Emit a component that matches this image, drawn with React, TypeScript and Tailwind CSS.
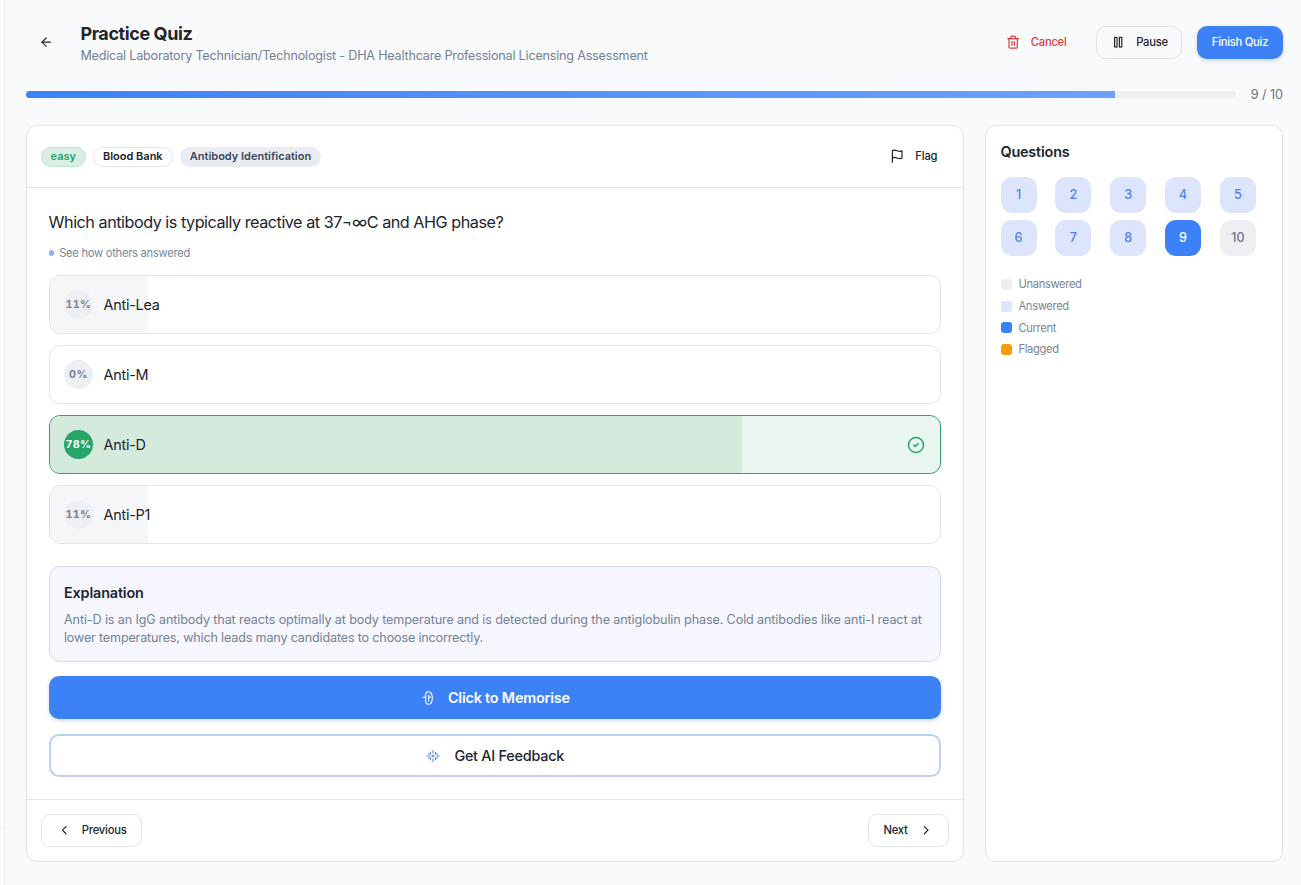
import type { ReactNode } from "react";
import { ArrowLeft, ChevronLeft, ChevronRight, CircleCheck, Trash2 } from "lucide-react";

type Option = { label: string; percent: string; share: number; correct?: boolean };

const options: Option[] = [
  { label: "Anti-Lea", percent: "11%", share: 11.1 },
  { label: "Anti-M", percent: "0%", share: 0 },
  { label: "Anti-D", percent: "78%", share: 77.8, correct: true },
  { label: "Anti-P1", percent: "11%", share: 11.1 },
];

const legend = [
  { label: "Unanswered", color: "bg-[#edeff2]" },
  { label: "Answered", color: "bg-[#dde5fc]" },
  { label: "Current", color: "bg-[#3c82f6]" },
  { label: "Flagged", color: "bg-[#f59e0b]" },
];

function PauseIcon() {
  return (
    <svg width="14.4" height="14.4" viewBox="0 0 24 24" fill="none" stroke="currentColor" strokeWidth="2">
      <rect x="6" y="4" width="4" height="16" />
      <rect x="14" y="4" width="4" height="16" />
    </svg>
  );
}

function FlagIcon() {
  return (
    <svg width="14.4" height="14.4" viewBox="0 0 24 24" fill="none" stroke="currentColor" strokeWidth="2" strokeLinecap="round" strokeLinejoin="round">
      <path d="M4 15s1-1 4-1 5 2 8 2 4-1 4-1V3s-1 1-4 1-5-2-8-2-4 1-4 1z" />
      <line x1="4" x2="4" y1="22" y2="15" />
    </svg>
  );
}

function MemoriseIcon() {
  return (
    <svg width="12" height="14" viewBox="0 0 12 14" fill="none" stroke="currentColor" strokeWidth="1.1" strokeLinecap="round" strokeLinejoin="round">
      <path d="M3.9 2.2C4.5 0.9 5.8 0.5 7 0.8C9.2 1.3 10.3 3.8 10.3 6.9S9.2 12.7 7 13.2C5.6 13.4 4.2 12.8 3.8 11.4C3.5 10.4 3.6 9.4 3.7 8.4V5.4C3.5 4.3 3.4 3.2 3.9 2.2Z" />
      <path d="M1.2 6.4H3.5M6.6 4v6.2M6.7 6.5c.9.2 1.4-.1 1.5-.9" />
    </svg>
  );
}

function FeedbackIcon() {
  return (
    <svg width="14" height="14" viewBox="0 0 14 14" fill="none" stroke="currentColor" strokeWidth="1" strokeLinecap="round">
      <path d="M7 1.4V4M7 6V8M7 10v2.6M1 7h2.4M5.6 7h2.8M10.6 7H13M4.5 3.2v2M4.5 8.8v2M9.5 3.2v2M9.5 8.8v2M2.4 5h1M2.4 9h1M10.6 5h1M10.6 9h1" />
    </svg>
  );
}

function Badge({ className, children }: { className: string; children: ReactNode }) {
  return (
    <span className={"flex h-5 items-center justify-center rounded-full border text-[11px] leading-none font-semibold " + className}>
      {children}
    </span>
  );
}

function OptionRow({ label, percent, share, correct }: Option) {
  return (
    <button
      className={
        "relative flex h-[59px] w-full items-center overflow-hidden rounded-[11px] border px-[14.4px] text-left " +
        (correct ? "border-[#2fa36b] bg-[#e9f5ef]" : "border-[#e1e5ea] bg-white")
      }
    >
      <span
        className={"absolute inset-y-0 left-0 " + (correct ? "bg-[#d3eadd]" : "bg-[#f5f6f8]")}
        style={{ width: share + "%" }}
      />
      <span
        className={
          "relative flex size-[28.8px] shrink-0 items-center justify-center rounded-full pt-px text-[10.8px] font-bold tracking-[0.3px] tabular-nums " +
          (correct ? "bg-[#27a468] text-white" : "bg-[#edeff3] text-[#768296]")
        }
      >
        {percent}
      </span>
      <span className="relative ml-[10.8px] flex-1 pt-px text-[14.4px] tracking-[-0.26px] text-[#20252e]">{label}</span>
      {correct && <CircleCheck className="relative text-[#27a468]" size={18} strokeWidth={2} />}
    </button>
  );
}

function QuestionCell({ n }: { n: number }) {
  const tone = n === 9 ? "bg-[#3c82f6] text-white" : n === 10 ? "bg-[#edeff2] text-[#6d798d]" : "bg-[#dde5fc] text-[#4f80e8]";
  return <button className={"size-9 rounded-[11px] pt-px text-[12.6px] font-medium " + tone}>{n}</button>;
}

export default function App() {
  return (
    <div className="flex h-[885px] w-[1301px] overflow-hidden bg-[#f9fafc] font-[Inter,sans-serif] text-[#20252e]">
      <aside className="flex w-[5px] shrink-0 flex-col justify-end border-r border-[#eceff3] bg-[#fcfdfe] pb-[57px]">
        <div className="h-px bg-[#e9ecf0]" />
      </aside>

      <main className="flex flex-1 flex-col pr-[18px] pl-[21px]">
        <header className="mt-[22px] flex h-[41px] items-center">
          <button className="ml-[12.6px] flex w-[15px] justify-center">
            <ArrowLeft size={14.4} />
          </button>
          <div className="mt-[2px] ml-[26.8px] flex flex-1 flex-col">
            <h1 className="text-[18px] leading-[22px] font-bold tracking-[-0.4px]">Practice Quiz</h1>
            <p className="pt-[2px] text-[12.6px] leading-[18px] tracking-[-0.2px] whitespace-nowrap text-[#748195]">
              Medical Laboratory Technician/Technologist - DHA Healthcare Professional Licensing Assessment
            </p>
          </div>
          <div className="flex items-center text-[11.2px] font-medium tracking-[-0.25px]">
            <button className="flex h-8 items-center text-[#df3b3b]">
              <Trash2 size={14.4} />
              <span className="ml-[10.4px]">Cancel</span>
            </button>
            <button className="ml-[29.5px] flex h-[33px] w-[86px] items-center rounded-[10px] border border-[#e1e5ea] pl-[14.4px]">
              <PauseIcon />
              <span className="ml-[10.4px]">Pause</span>
            </button>
            <button className="ml-[15px] h-[33px] w-[86px] rounded-[10px] bg-[#3c82f6] text-white shadow-[0_2px_4px_rgba(30,60,120,0.18)]">
              Finish Quiz
            </button>
          </div>
        </header>

        <div className="mt-[22px] flex h-[19px] items-center">
          <div className="h-[7px] w-[1210px] overflow-hidden rounded-full bg-[#edeff2]">
            <div className="h-full w-[90%] bg-linear-to-r from-[#3c82f6] to-[#6ea1f8]" />
          </div>
          <span className="flex-1 pt-px text-right text-[12.6px] tracking-[-0.05px] text-[#667285]">9 / 10</span>
        </div>

        <div className="mt-[21px] flex h-[737px] gap-[21px]">
          <section className="flex w-[938px] flex-col rounded-[11px] border border-[#dfe3e9] bg-white">
            <div className="flex h-[62px] items-center gap-[7.2px] border-b border-[#dfe3e9] pr-[25.6px] pl-[14px]">
              <Badge className="w-[44.6px] border-[#bfe3cf] bg-[#d9efe3] text-[#27a468]">easy</Badge>
              <Badge className="w-[80px] border-[#e1e5ea] bg-white">Blood Bank</Badge>
              <Badge className="w-[141px] border-transparent bg-[#e9ecf1] text-[#3b4759]">Antibody Identification</Badge>
              <button className="ml-auto flex items-center text-[11.2px] font-medium tracking-[-0.15px]">
                <FlagIcon />
                <span className="ml-[11px]">Flag</span>
              </button>
            </div>

            <div className="flex flex-1 flex-col pt-[21px] pr-[22.4px] pl-[21.6px]">
              <h2 className="pt-px text-[16.2px] leading-[25px] tracking-[-0.48px] whitespace-nowrap">
                Which antibody is typically reactive at 37¬∞C and AHG phase?
              </h2>
              <div className="mt-[10px] flex h-[16px] items-center text-[11.2px] tracking-[-0.28px] text-[#7a879b]">
                <span className="mr-[5px] size-[5.6px] rounded-full bg-[#8fb2f2]" />
                <span className="pt-px">See how others answered</span>
              </div>
              <div className="mt-[13.7px] flex flex-col gap-[11.2px]">
                {options.map((o) => (
                  <OptionRow key={o.label} {...o} />
                ))}
              </div>

              <div className="mt-[22px] h-[95.6px] rounded-[11px] border border-[#ced9f5] bg-[#f6f7fe] px-[14.4px] pt-[14.4px]">
                <h3 className="text-[14.4px] leading-[22px] font-semibold tracking-[-0.15px]">Explanation</h3>
                <p className="mt-[7px] text-[12.6px] leading-[18px] tracking-[-0.118px] whitespace-nowrap text-[#748195]">
                  Anti-D is an IgG antibody that reacts optimally at body temperature and is detected during the antiglobulin phase. Cold antibodies like anti-I react at
                  <br />
                  <span className="tracking-[-0.17px]">lower temperatures, which leads many candidates to choose incorrectly.</span>
                </p>
              </div>

              <button className="mt-[14.2px] flex h-[43px] items-center justify-center rounded-[10px] bg-[#3c82f6] text-[14.4px] font-semibold tracking-[-0.19px] text-white shadow-[0_2px_4px_rgba(30,60,120,0.18)]">
                <span className="ml-[3px]">
                  <MemoriseIcon />
                </span>
                <span className="ml-[13.6px]">Click to Memorise</span>
              </button>
              <button className="mt-[15px] flex h-[43px] items-center justify-center rounded-[10px] border-2 border-[#bccff6] bg-white text-[14.4px] font-medium tracking-[-0.24px]">
                <span className="ml-px text-[#4a80e8]">
                  <FeedbackIcon />
                </span>
                <span className="ml-[14.2px]">Get AI Feedback</span>
              </button>
            </div>

            <div className="flex h-[62px] items-center justify-between border-t border-[#e1e5ea] px-[14px] text-[11.2px] font-medium tracking-[-0.2px]">
              <button className="flex h-[33px] w-[101px] items-center rounded-[9px] border border-[#e1e5ea] pl-[14.6px]">
                <ChevronLeft size={14.4} />
                <span className="ml-[10.8px]">Previous</span>
              </button>
              <button className="flex h-[33px] w-[81px] items-center rounded-[9px] border border-[#e1e5ea] pl-[14.4px]">
                <span>Next</span>
                <ChevronRight className="ml-[11.2px]" size={14.4} />
              </button>
            </div>
          </section>

          <aside className="flex flex-1 flex-col rounded-[11px] border border-[#dfe3e9] bg-white px-[14.5px] pt-[15px]">
            <h2 className="text-[14.4px] leading-[22px] font-semibold tracking-[-0.19px]">Questions</h2>
            <div className="mt-[13.8px] grid grid-cols-5 gap-[7.2px]">
              {[1, 2, 3, 4, 5, 6, 7, 8, 9, 10].map((n) => (
                <QuestionCell key={n} n={n} />
              ))}
            </div>
            <ul className="mt-[21px] flex flex-col gap-[6.6px] text-[11.2px] leading-[14px] tracking-[-0.35px] text-[#7a8598]">
              {legend.map((item) => (
                <li key={item.label} className="flex h-[15px] items-center gap-[7px]">
                  <span className={"size-[11px] rounded-[3px] " + item.color} />
                  <span>{item.label}</span>
                </li>
              ))}
            </ul>
          </aside>
        </div>
      </main>
    </div>
  );
}
